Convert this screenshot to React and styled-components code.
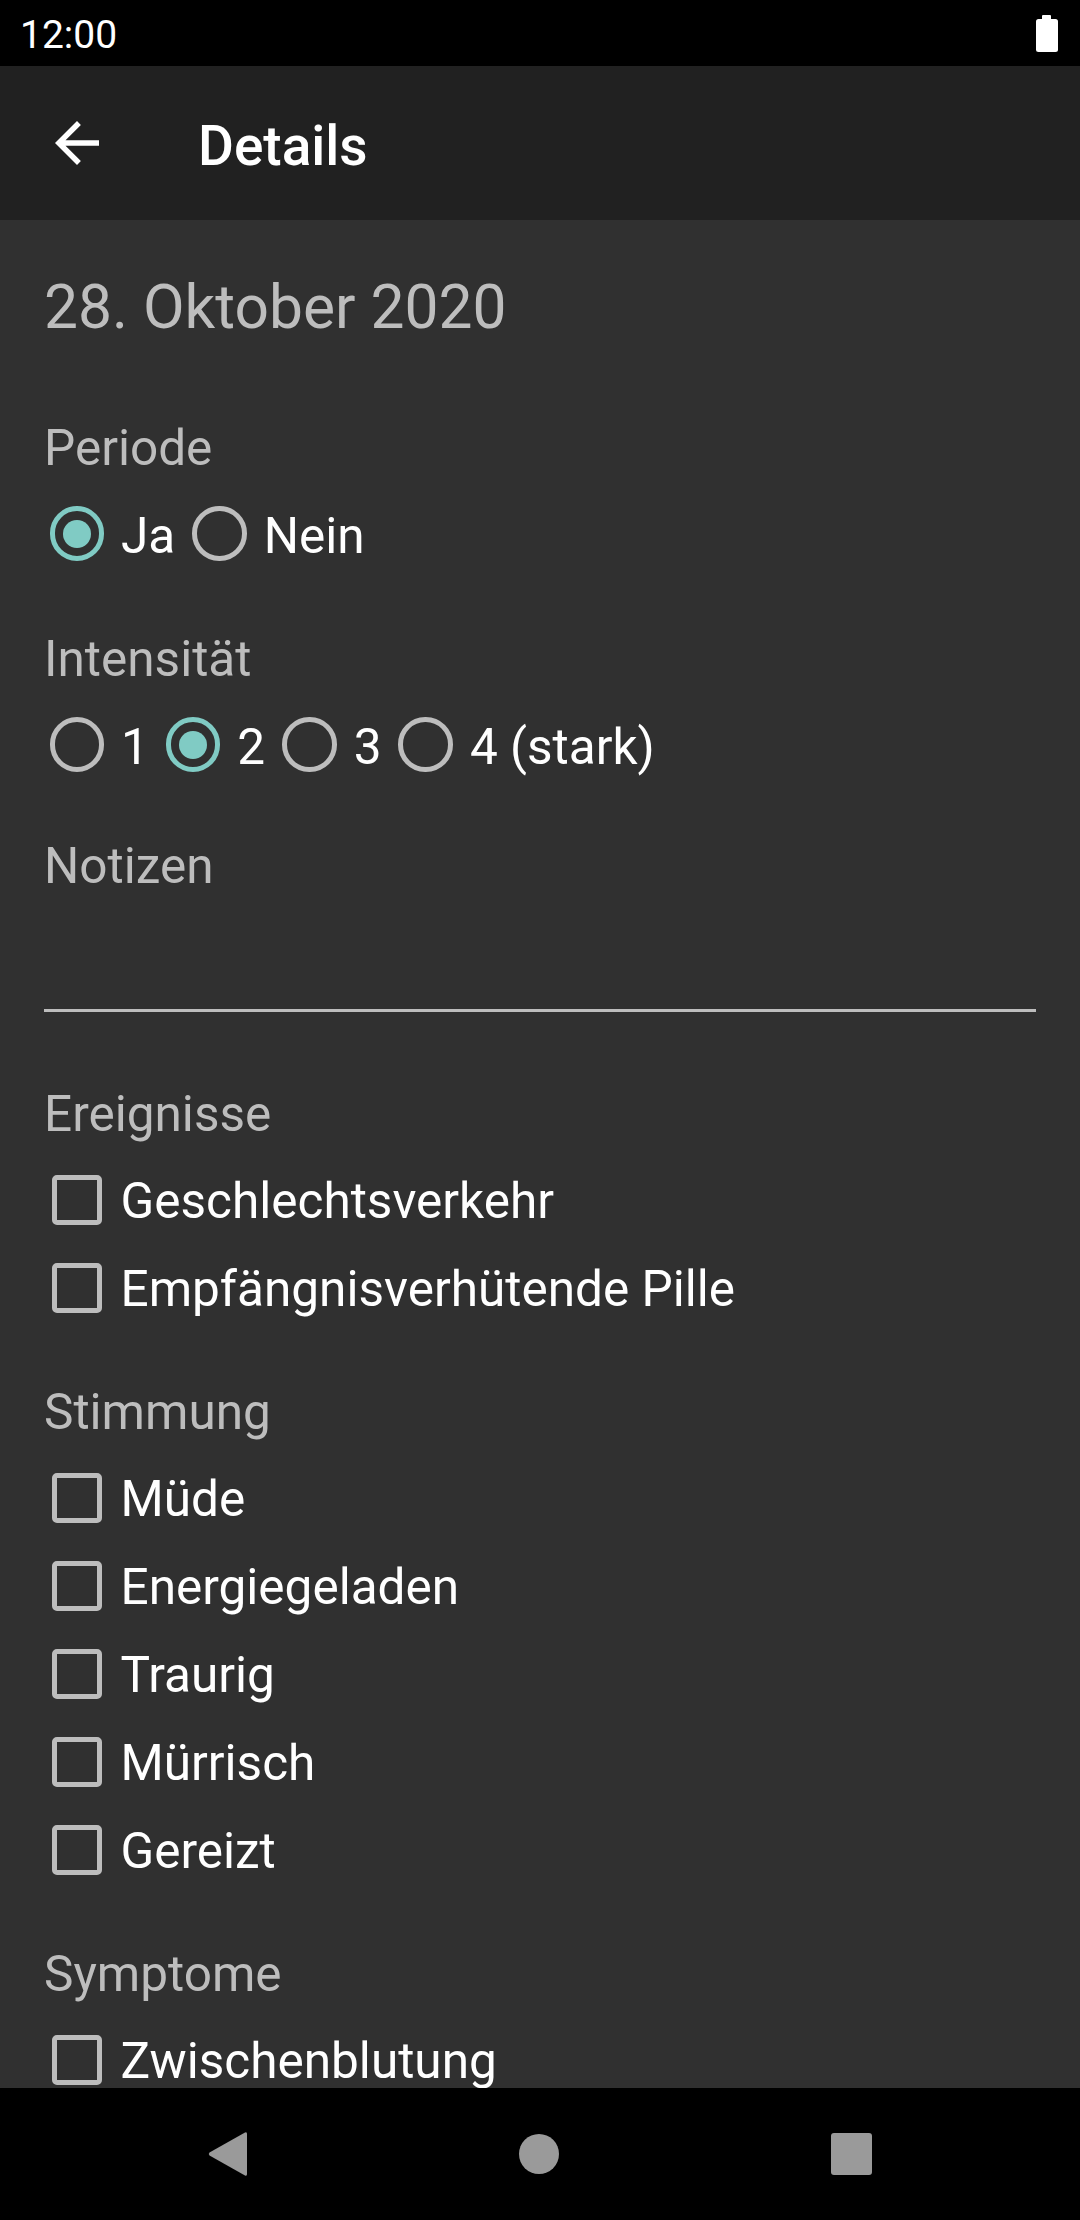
import React from 'react';
import styled, { createGlobalStyle } from 'styled-components';

const GlobalStyle = createGlobalStyle`
  html, body {
    margin: 0;
    padding: 0;
    background: #303030;
  }
  body {
    font-family: Roboto, "Noto Sans", "Liberation Sans", sans-serif;
  }
  * {
    box-sizing: border-box;
  }
`;

const Screen = styled.div`
  display: flex;
  flex-direction: column;
  height: 100vh;
  overflow: hidden;
  background: #303030;
`;

const StatusBar = styled.div`
  height: 66px;
  flex-shrink: 0;
  background: #000;
  display: flex;
  align-items: center;
  justify-content: space-between;
  padding: 0 22px 0 20px;
`;

const Clock = styled.span`
  color: #fff;
  font-size: 39px;
  line-height: 66px;
  padding-top: 4px;
`;

const Toolbar = styled.div`
  height: 154px;
  flex-shrink: 0;
  background: #212121;
  display: flex;
  align-items: center;
  padding-left: 44px;
`;

const BackButton = styled.svg`
  width: 66px;
  height: 66px;
  fill: #fff;
`;

const Title = styled.h1`
  margin: 6px 0 0 88px;
  font-size: 55px;
  line-height: 66px;
  font-weight: 500;
  color: #fff;
`;

const Content = styled.div`
  flex: 1;
  overflow: hidden;
  padding: 52px 44px 0;
`;

const DateHeading = styled.div`
  font-size: 60.5px;
  line-height: 72px;
  color: #bdbdbd;
`;

const SectionLabel = styled.div`
  margin-top: ${(p) => p.$top}px;
  font-size: 49.5px;
  line-height: 58px;
  color: #bdbdbd;
`;

const RadioRow = styled.div`
  display: flex;
  align-items: center;
  height: 65px;
  margin-top: 24px;
`;

const RadioItem = styled.label`
  display: flex;
  align-items: center;
  padding: 0 11.5px 0 5.5px;
`;

const RadioCircle = styled.span`
  width: 54.5px;
  height: 54.5px;
  flex-shrink: 0;
  border-radius: 50%;
  border: 5.5px solid ${(p) => (p.$checked ? '#80cbc4' : '#bdbdbd')};
  display: flex;
  align-items: center;
  justify-content: center;

  &::after {
    content: '';
    display: ${(p) => (p.$checked ? 'block' : 'none')};
    width: 28px;
    height: 28px;
    border-radius: 50%;
    background: #80cbc4;
  }
`;

const OptionText = styled.span`
  margin-left: ${(p) => p.$gap}px;
  padding-top: ${(p) => p.$shift || 0}px;
  font-size: 49.5px;
  line-height: 58px;
  color: #fff;
  white-space: nowrap;
`;

const NotesField = styled.div`
  height: 117px;
  border-bottom: 3px solid #bdbdbd;
`;

const CheckList = styled.div`
  margin-top: 13px;
  display: flex;
  flex-direction: column;
`;

const CheckRow = styled.label`
  display: flex;
  align-items: center;
  height: 88px;
  padding-left: 8px;
`;

const CheckBox = styled.span`
  width: 49.5px;
  height: 49.5px;
  flex-shrink: 0;
  border: 5.5px solid #bdbdbd;
  border-radius: 5px;
`;

const NavBar = styled.div`
  height: 132px;
  flex-shrink: 0;
  background: #000;
  display: flex;
  align-items: center;
  justify-content: center;
  gap: 272px;
`;

const NavIcon = styled.svg`
  width: ${(p) => p.$w}px;
  height: 46px;
  fill: #9a9a9a;
`;

const Battery = () => (
  <svg width="22" height="37" viewBox="0 0 22 37">
    <rect x="6" y="0" width="9" height="6" rx="1" fill="#fff" />
    <rect x="0" y="4" width="22" height="33" rx="2.5" fill="#fff" />
  </svg>
);

const Radio = ({ label, checked }) => (
  <RadioItem>
    <RadioCircle $checked={checked} />
    <OptionText $gap={17} $shift={5}>{label}</OptionText>
  </RadioItem>
);

const Check = ({ label }) => (
  <CheckRow>
    <CheckBox />
    <OptionText $gap={19} $shift={2}>{label}</OptionText>
  </CheckRow>
);

const events = ['Geschlechtsverkehr', 'Empfängnisverhütende Pille'];
const moods = ['Müde', 'Energiegeladen', 'Traurig', 'Mürrisch', 'Gereizt'];
const symptoms = ['Zwischenblutung'];

export default function App() {
  return (
    <>
      <GlobalStyle />
      <Screen>
        <StatusBar>
          <Clock>12:00</Clock>
          <Battery />
        </StatusBar>

        <Toolbar>
          <BackButton viewBox="0 0 24 24">
            <path d="M20 11H7.83l5.59-5.59L12 4l-8 8 8 8 1.41-1.41L7.83 13H20v-2z" />
          </BackButton>
          <Title>Details</Title>
        </Toolbar>

        <Content>
          <DateHeading>28. Oktober 2020</DateHeading>

          <SectionLabel $top={75}>Periode</SectionLabel>
          <RadioRow>
            <Radio label="Ja" checked />
            <Radio label="Nein" />
          </RadioRow>

          <SectionLabel $top={64}>Intensität</SectionLabel>
          <RadioRow>
            <Radio label="1" />
            <Radio label="2" checked />
            <Radio label="3" />
            <Radio label="4 (stark)" />
          </RadioRow>

          <SectionLabel $top={60}>Notizen</SectionLabel>
          <NotesField />

          <SectionLabel $top={73}>Ereignisse</SectionLabel>
          <CheckList>
            {events.map((e) => (
              <Check key={e} label={e} />
            ))}
          </CheckList>

          <SectionLabel $top={51}>Stimmung</SectionLabel>
          <CheckList>
            {moods.map((m) => (
              <Check key={m} label={m} />
            ))}
          </CheckList>

          <SectionLabel $top={51}>Symptome</SectionLabel>
          <CheckList>
            {symptoms.map((s) => (
              <Check key={s} label={s} />
            ))}
          </CheckList>
        </Content>

        <NavBar>
          <NavIcon $w={39} viewBox="0 0 39 46">
            <path d="M37 1.5 Q39 0.5 39 3 L39 43 Q39 45.5 37 44.5 L1.5 24.5 Q0 23 1.5 21.5 Z" />
          </NavIcon>
          <NavIcon $w={40} viewBox="0 0 40 46">
            <circle cx="20" cy="23" r="20" />
          </NavIcon>
          <NavIcon $w={41} viewBox="0 0 41 46">
            <rect x="0" y="2" width="41" height="42" rx="3" />
          </NavIcon>
        </NavBar>
      </Screen>
    </>
  );
}
